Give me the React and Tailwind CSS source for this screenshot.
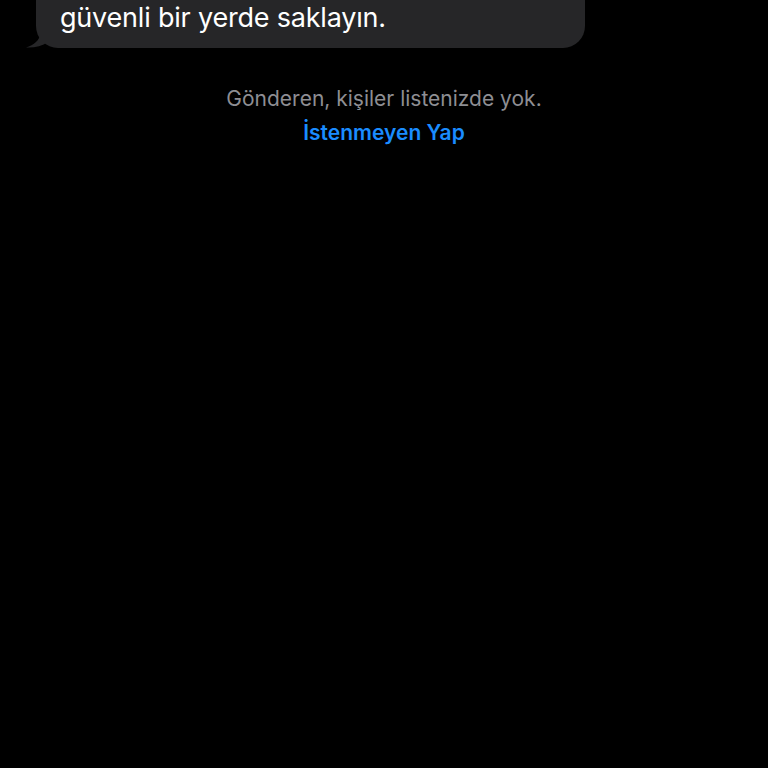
export default function App() {
  return (
    <div className="w-[768px] h-[768px] bg-black overflow-hidden" style={{ fontFamily: 'Inter, "Noto Sans", sans-serif' }}>
      <div className="relative ml-[36px] w-[549px] -mt-[40px]">
        <div className="bg-[#262628] rounded-[22px] pl-[24px] pr-4 pt-[41px] pb-[13px]">
          <p className="text-white text-[27px] leading-[34px] tracking-[-0.2px]">güvenli bir yerde saklayın.</p>
        </div>
        <svg className="absolute left-[-10px] bottom-0" width="34" height="26" viewBox="0 0 34 26">
          <path d="M14 0 L14 12 C14 18 8 23 0 25.5 C8 26 16 24 22 20 L34 20 L34 0 Z" fill="#262628" />
        </svg>
      </div>
      <div className="flex flex-col items-center mt-[38px]">
        <p className="text-[#8e8e93] text-[21px] leading-[26px]">Gönderen, kişiler listenizde yok.</p>
        <p className="text-[#1a8cff] text-[21px] leading-[26px] font-semibold mt-[8px]">İstenmeyen Yap</p>
      </div>
    </div>
  );
}
